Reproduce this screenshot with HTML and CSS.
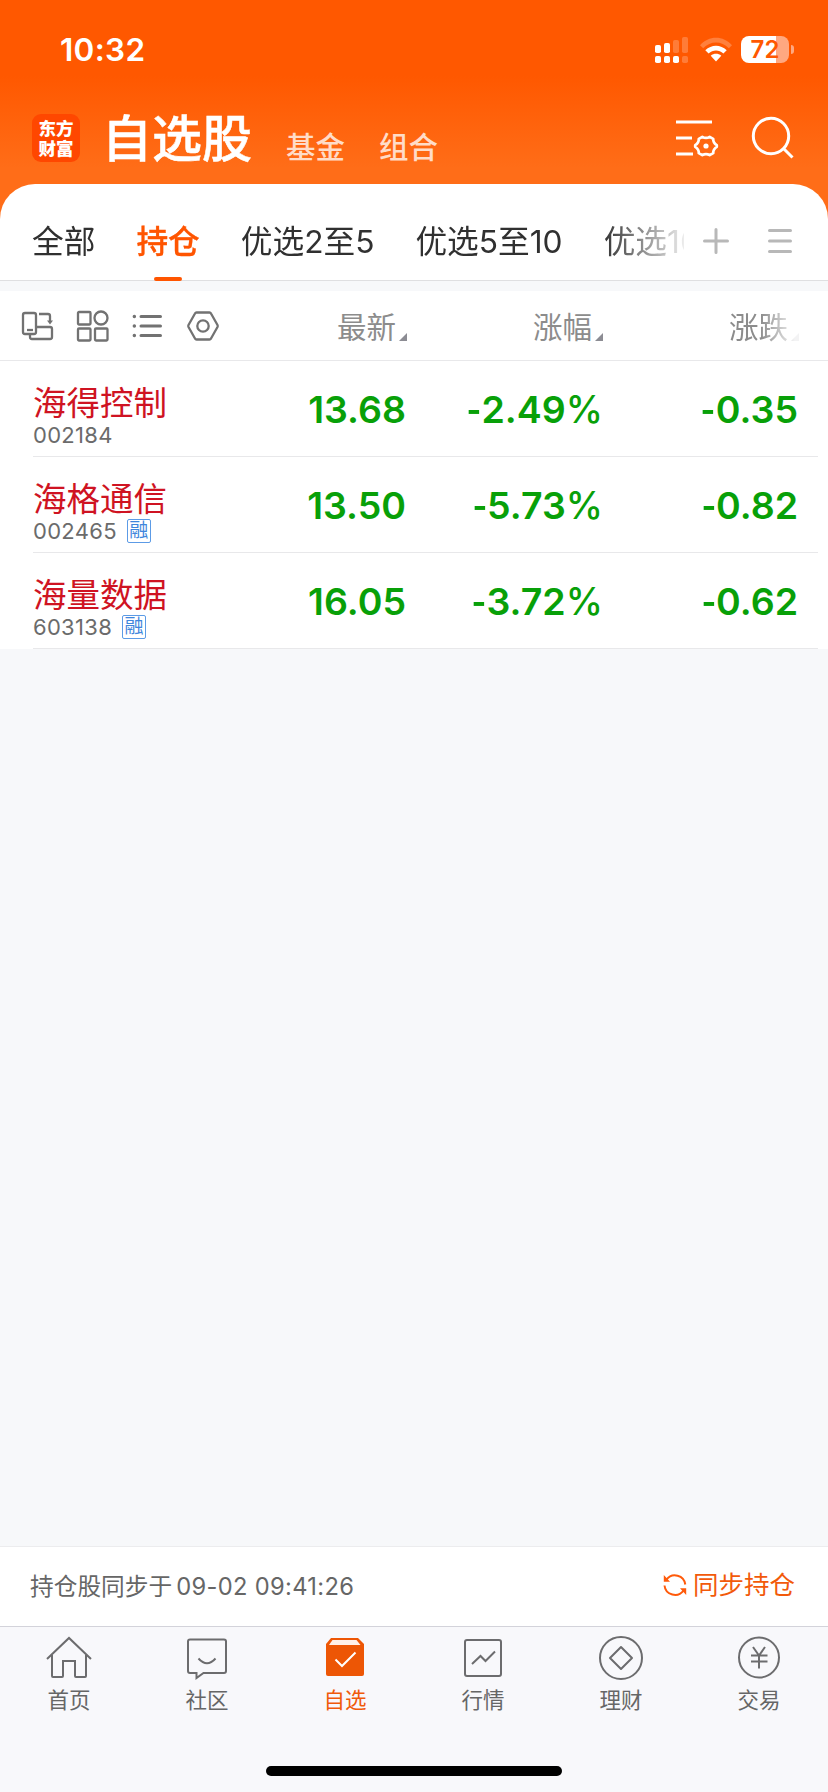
FILE: index.html
```html
<!DOCTYPE html>
<html lang="zh-CN">
<head>
<meta charset="utf-8">
<title>自选股</title>
<link rel="stylesheet" href="styles.css">
</head>
<body>
<div class="app">
  <header class="header">
    <div class="status">
      <span class="time">10:32</span>
      <div class="status-icons">
        <svg class="signal" width="34" height="28" viewBox="0 0 34 28" fill="#fff">
          <rect x="0" y="9" width="6" height="8" rx="1.8"/><rect x="9" y="7" width="6" height="10" rx="1.8"/>
          <rect x="18" y="4" width="6" height="13" rx="1.8" opacity=".22"/><rect x="27" y="1" width="6" height="16" rx="1.8" opacity=".22"/>
          <rect x="0" y="20" width="6" height="7" rx="1.8"/><rect x="9" y="20" width="6" height="7" rx="1.8"/>
          <rect x="18" y="20" width="6" height="7" rx="1.8"/><rect x="27" y="20" width="6" height="7" rx="1.8" opacity=".22"/>
        </svg>
        <svg class="wifi" width="32" height="25" viewBox="0 0 32 25" fill="#fff">
          <path opacity=".24" d="M0 8.2C8.500-1.800 23.500-1.800 32 8.200L28.800 11.200C21.500 3.600 10.500 3.600 3.200 11.200Z"/>
          <path d="M5.300 13.200C11.400 7.200 20.600 7.200 26.700 13.200L23.400 16.500C19.100 12.500 12.900 12.500 8.600 16.500Z"/>
          <path d="M10.700 18.800C13.900 16.200 18.100 16.200 21.300 18.800L16 24.500Z"/>
        </svg>
        <div class="battery"><div class="battery-body">72</div><i class="battery-tip"></i></div>
      </div>
    </div>
    <div class="titlebar">
      <div class="logo"><span>东方</span><span>财富</span></div>
      <h1 class="title">自选股</h1>
      <span class="subtitle">基金</span>
      <span class="subtitle">组合</span>
      <svg class="manage" width="44" height="40" viewBox="0 0 44 40" fill="none" stroke="#fff" stroke-width="3">
        <path d="M1 4H37M1 20H17M1 36H18"/>
        <path stroke-width="2.700" stroke-linejoin="round" d="M27.300 18.800Q31 21.100 34.700 18.800L38.200 20.800Q38.100 25.100 41.800 27.200V28.800Q38.100 30.900 38.200 35.200L34.700 37.200Q31 34.900 27.300 37.200L23.800 35.200Q23.900 30.900 20.200 28.800V27.200Q23.900 25.100 23.800 20.800Z"/>
        <circle cx="31" cy="28" r="2.600" fill="#fff" stroke="none"/>
      </svg>
      <svg class="search" width="44" height="44" viewBox="0 0 44 44" fill="none" stroke="#fff" stroke-width="3">
        <circle cx="20" cy="20" r="17.700"/><path d="M32.500 32.500L41.500 41.500"/>
      </svg>
    </div>
  </header>

  <nav class="tabs">
    <div class="tab-list">
      <span class="tab">全部</span>
      <span class="tab active">持仓</span>
      <span class="tab">优选2至5</span>
      <span class="tab">优选5至10</span>
      <span class="tab">优选10</span>
    </div>
    <svg class="plus" width="28" height="28" viewBox="0 0 28 28" stroke="#b8b8b8" stroke-width="3" stroke-linecap="round"><path d="M2.500 14H25.500M14 2.500V25.500"/></svg>
    <svg class="menu" width="26" height="28" viewBox="0 0 26 28" stroke="#b8b8b8" stroke-width="3" stroke-linecap="round"><path d="M2.500 3.500H23.500M2.500 14H23.500M2.500 24.500H23.500"/></svg>
  </nav>

  <div class="table-head">
    <div class="tools">
      <svg width="34" height="34" viewBox="0 0 34 34" fill="none" stroke="#727272" stroke-width="2.300">
        <rect x="2" y="4" width="13" height="21" rx="2"/><path d="M6 21H12"/>
        <path d="M15 18H29Q31 18 31 20V28Q31 30 29 30H11Q9 30 9 28V25"/>
        <path d="M18 5H27Q29 5 29 7V12"/><path d="M26 11.500H32L29 15.500Z" fill="#727272" stroke="none"/>
      </svg>
      <svg width="34" height="34" viewBox="0 0 34 34" fill="none" stroke="#727272" stroke-width="2.300">
        <rect x="2" y="3" width="12.500" height="12.500" rx="1"/><circle cx="25" cy="9" r="6.500"/>
        <rect x="2" y="19.500" width="12.500" height="12" rx="1"/><rect x="19" y="19.500" width="12.500" height="12" rx="1"/>
      </svg>
      <svg width="34" height="34" viewBox="0 0 34 34" fill="none" stroke="#727272" stroke-width="3" stroke-linecap="round">
        <path d="M10 7.500H29.500M10 17H29.500M10 26.500H29.500"/><path stroke-width="3.400" d="M3.300 7.500H3.400M3.300 17H3.400M3.300 26.500H3.400"/>
      </svg>
      <svg width="34" height="34" viewBox="0 0 34 34" fill="none" stroke="#727272" stroke-width="2.300" stroke-linejoin="round">
        <path d="M10.500 3.500H23.500Q24.500 3.500 25 4.500L31.500 16Q32 17 31.500 18L25 29.500Q24.500 30.500 23.500 30.500H10.500Q9.500 30.500 9 29.500L2.500 18Q2 17 2.500 16L9 4.500Q9.500 3.500 10.500 3.500Z"/><circle cx="17" cy="17" r="5.700"/>
      </svg>
    </div>
    <span class="col c1">最新<i class="sort"></i></span>
    <span class="col c2">涨幅<i class="sort"></i></span>
    <span class="col c3">涨跌<i class="sort"></i></span>
  </div>

  <main class="list">
    <div class="stock">
      <div class="id"><span class="name">海得控制</span><span class="meta">002184</span></div>
      <span class="num">13.68</span><span class="num rate"><b class="minus">-</b>2.49<b class="pct">%</b></span><span class="num"><b class="minus">-</b>0.35</span>
    </div>
    <div class="stock">
      <div class="id"><span class="name">海格通信</span><span class="meta">002465<em class="badge">融</em></span></div>
      <span class="num">13.50</span><span class="num rate"><b class="minus">-</b>5.73<b class="pct">%</b></span><span class="num"><b class="minus">-</b>0.82</span>
    </div>
    <div class="stock">
      <div class="id"><span class="name">海量数据</span><span class="meta">603138<em class="badge">融</em></span></div>
      <span class="num">16.05</span><span class="num rate"><b class="minus">-</b>3.72<b class="pct">%</b></span><span class="num"><b class="minus">-</b>0.62</span>
    </div>
  </main>

  <section class="sync">
    <span class="sync-text">持仓股同步于<span class="sync-time">09-02 09:41:26</span></span>
    <span class="sync-btn">
      <svg width="24" height="24" viewBox="0 0 24 24" fill="none" stroke="#ff5a0a" stroke-width="2">
        <path d="M3.500 6.500A10.500 10.500 0 0 1 22.300 11.500M1.500 12.500A10.500 10.500 0 0 0 20.500 17.500"/>
        <path d="M.8 2V8.700H7ZM23.200 22V15.300H17Z" fill="#ff5a0a" stroke="none"/>
      </svg>同步持仓
    </span>
  </section>

  <footer class="tabbar">
    <div class="item"><svg width="48" height="48" viewBox="0 0 48 48" fill="none" stroke="#6c6c6e" stroke-width="2"><path d="M2 26L24 5L46 26M7 22V43Q7 44 8 44H17Q18 44 18 43V28H30V43Q30 44 31 44H40Q41 44 41 43V22"/></svg><span>首页</span></div>
    <div class="item"><svg width="48" height="48" viewBox="0 0 48 48" fill="none" stroke="#6c6c6e" stroke-width="2"><path d="M7 6.500H41Q43 6.500 43 8.500V38Q43 40 41 40H20.500L13.500 45V40H7Q5 40 5 38V8.500Q5 6.500 7 6.500Z"/><path d="M15.500 25.500Q24 35 32.500 25.500"/></svg><span>社区</span></div>
    <div class="item on"><svg width="48" height="48" viewBox="0 0 48 48" fill="none"><path fill="#ed5605" d="M10 5H37L43 11V41Q43 43 41 43H7Q5 43 5 41V11Z"/><path fill="#fff0e8" d="M11.500 7H35.500L39.500 12H8Z"/><path stroke="#fff" stroke-width="2" d="M14.500 26.500L21 33L34.500 19.500"/></svg><span>自选</span></div>
    <div class="item"><svg width="48" height="48" viewBox="0 0 48 48" fill="none" stroke="#6c6c6e" stroke-width="2"><rect x="6" y="7" width="36" height="36" rx="2"/><path d="M13 31L21.500 23L26.500 28L36 18.500"/></svg><span>行情</span></div>
    <div class="item"><svg width="48" height="48" viewBox="0 0 48 48" fill="none" stroke="#6c6c6e" stroke-width="2"><circle cx="24" cy="25" r="21"/><path stroke-linejoin="round" d="M24 14L35 25L24 36L13 25Z"/></svg><span>理财</span></div>
    <div class="item"><svg width="48" height="48" viewBox="0 0 48 48" fill="none" stroke="#6c6c6e" stroke-width="2"><circle cx="24" cy="24.500" r="20"/><path d="M18 14L24 22.500L30 14M16 22.500H32.500M16 28.500H32.500M24 22.500V35.500"/></svg><span>交易</span></div>
    <i class="home-bar"></i>
  </footer>
</div>
</body>
</html>
```
FILE: styles.css
```css
* { box-sizing: border-box; }
body { margin: 0; background: #f7f8fa; }
svg { display: block; flex: none; }
i, em { font-style: normal; }
.app {
  width: 828px; height: 1792px; display: flex; flex-direction: column;
  overflow: hidden; background: #f7f8fa;
  font-family: Inter, "Noto Sans CJK SC", sans-serif;
  white-space: nowrap;
}

/* header */
.header {
  height: 222px; margin-bottom: -38px; flex: none; color: #fff;
  background: linear-gradient(#ff5800 0, #ff5800 76px, #ff6d18 168px);
}
.status { height: 100px; padding: 0 34px 0 60px; display: flex; justify-content: space-between; }
.time { font-size: 31.500px; font-weight: 600; line-height: 40px; padding-top: 30px; letter-spacing: .3px; }
.status-icons { display: flex; align-items: flex-start; padding-top: 36px; }
.wifi { margin: 1px 9px 0 11px; }
.battery { display: flex; align-items: center; gap: 2px; }
.battery-body {
  width: 48px; height: 27px; border-radius: 8px; color: #ff5800;
  background: linear-gradient(90deg, #fff 35px, #ffa880 35px);
  font-size: 24px; font-weight: 600; line-height: 27px; text-align: center;
}
.battery-tip { width: 3px; height: 9px; border-radius: 0 3px 3px 0; background: #ffa880; }
.titlebar { display: flex; align-items: flex-start; padding: 0 34px 0 32px; height: 84px; }
.logo {
  width: 48px; height: 48px; margin-top: 14px; border-radius: 9px; background: #ff4700;
  display: flex; flex-direction: column; align-items: center; justify-content: center;
  font: 900 17.500px/20px "Noto Sans CJK SC", sans-serif;
}
.title { margin: 4px 0 0 22px; font-size: 50px; line-height: 70px; font-weight: 500; width: 152px; -webkit-text-stroke: .5px #fff; }
.subtitle { width: 92px; margin-top: 27px; margin-left: 1px; font-size: 29.500px; line-height: 40px; font-weight: 500; color: #ffdcc8; }
.title + .subtitle { margin-left: 32px; }
.manage { margin: 18px 0 0 auto; }
.search { margin: 16px -1px 0 32px; }

/* group tabs */
.tabs {
  position: relative; height: 97px; flex: none; background: #fff; border-radius: 35px 35px 0 0;
  border-bottom: 1px solid #dfdfe1; display: flex; align-items: center; padding: 0 35px 0 32px;
}
.tab-list {
  display: flex; gap: 41px; width: 652px; height: 97px; overflow: hidden; margin-bottom: -1px;
  -webkit-mask-image: linear-gradient(90deg, #000 570px, transparent 660px);
  mask-image: linear-gradient(90deg, #000 570px, transparent 660px);
}
.tab { position: relative; font-size: 31.700px; line-height: 116px; color: #303030; flex: none; }
.tab.active { color: #ff5500; font-weight: 500; -webkit-text-stroke: .3px #ff5500; }
.tab.active::after {
  content: ""; position: absolute; left: 50%; bottom: 0; width: 28px; height: 4px;
  margin-left: -14px; border-radius: 2px; background: #ff5500;
}
.plus { margin: 18px 0 0 18px; }
.menu { margin: 18px 0 0 auto; }

/* columns */
.table-head {
  display: grid; grid-template-columns: 220px 187px 196px 196px;
  height: 70px; margin-top: 10px; flex: none; background: #fff; border-bottom: 1px solid #e8e8ea;
}
.tools { display: flex; gap: 21px; padding: 18px 0 0 20.500px; }
.col {
  display: flex; justify-content: flex-end; align-items: flex-start; gap: 3px;
  font-size: 29.500px; line-height: 73px; color: #8c8c8c;
}
.sort { width: 8px; height: 8px; margin-top: 42px; background: #8c8c93; clip-path: polygon(100% 0, 100% 100%, 0 100%); }
.c3 {
  -webkit-mask-image: linear-gradient(90deg, #000 158px, rgba(0,0,0,.1) 192px);
  mask-image: linear-gradient(90deg, #000 158px, rgba(0,0,0,.1) 192px);
}

/* stocks */
.list { background: linear-gradient(#fff, #fff) no-repeat 0 0 / 100% 288px; flex: 1; }
.stock {
  display: grid; grid-template-columns: 177px 196px 196px 196px;
  height: 96px; margin: 0 10px 0 33px; border-bottom: 1px solid #e8e8ea;
}
.id { display: flex; flex-direction: column; }
.name { font-size: 33.500px; line-height: 44px; margin-top: 20px; color: #cf1322; }
.meta { display: flex; align-items: center; height: 24px; margin-top: -2px; font-size: 22px; letter-spacing: .3px; color: #6b6b6b; }
.badge {
  width: 24px; height: 24px; margin-left: 10px; border: 1px solid #5c9be6; border-radius: 2px;
  font-size: 19px; line-height: 22px; letter-spacing: 0; text-align: center; color: #3f86dc;
}
.num { text-align: right; font-size: 37.500px; line-height: 97px; font-weight: 600; color: #08a008; }
.rate { margin-right: -1px; }
.minus { display: inline-block; font-weight: 600; transform: scaleX(.85); transform-origin: right; }
.pct { font-weight: 500; }

/* sync bar */
.sync {
  height: 80px; flex: none; background: #fff; border-top: 1px solid #ececee;
  display: flex; justify-content: space-between; align-items: center; padding: 0 33px 3px 30px;
}
.sync-text { font-size: 23.700px; color: #666; }
.sync-time { margin-left: 4px; letter-spacing: .33px; }
.sync-btn { display: flex; align-items: center; gap: 6px; font-size: 25.500px; line-height: 36px; color: #f25a0a; margin-top: -1px; }

/* bottom navigation */
.tabbar {
  position: relative; height: 166px; flex: none; background: #f8f8fb; border-top: 1px solid #d3d3da;
  display: grid; grid-template-columns: repeat(6, 138px); align-content: start;
}
.item { display: flex; flex-direction: column; align-items: center; padding-top: 6px; font-size: 21.500px; line-height: 30px; color: #666; }
.item span { margin-top: 4px; }
.item.on { color: #f05a0a; }
.home-bar { position: absolute; left: 266px; bottom: 16px; width: 296px; height: 10px; border-radius: 5px; background: #000; }
```
